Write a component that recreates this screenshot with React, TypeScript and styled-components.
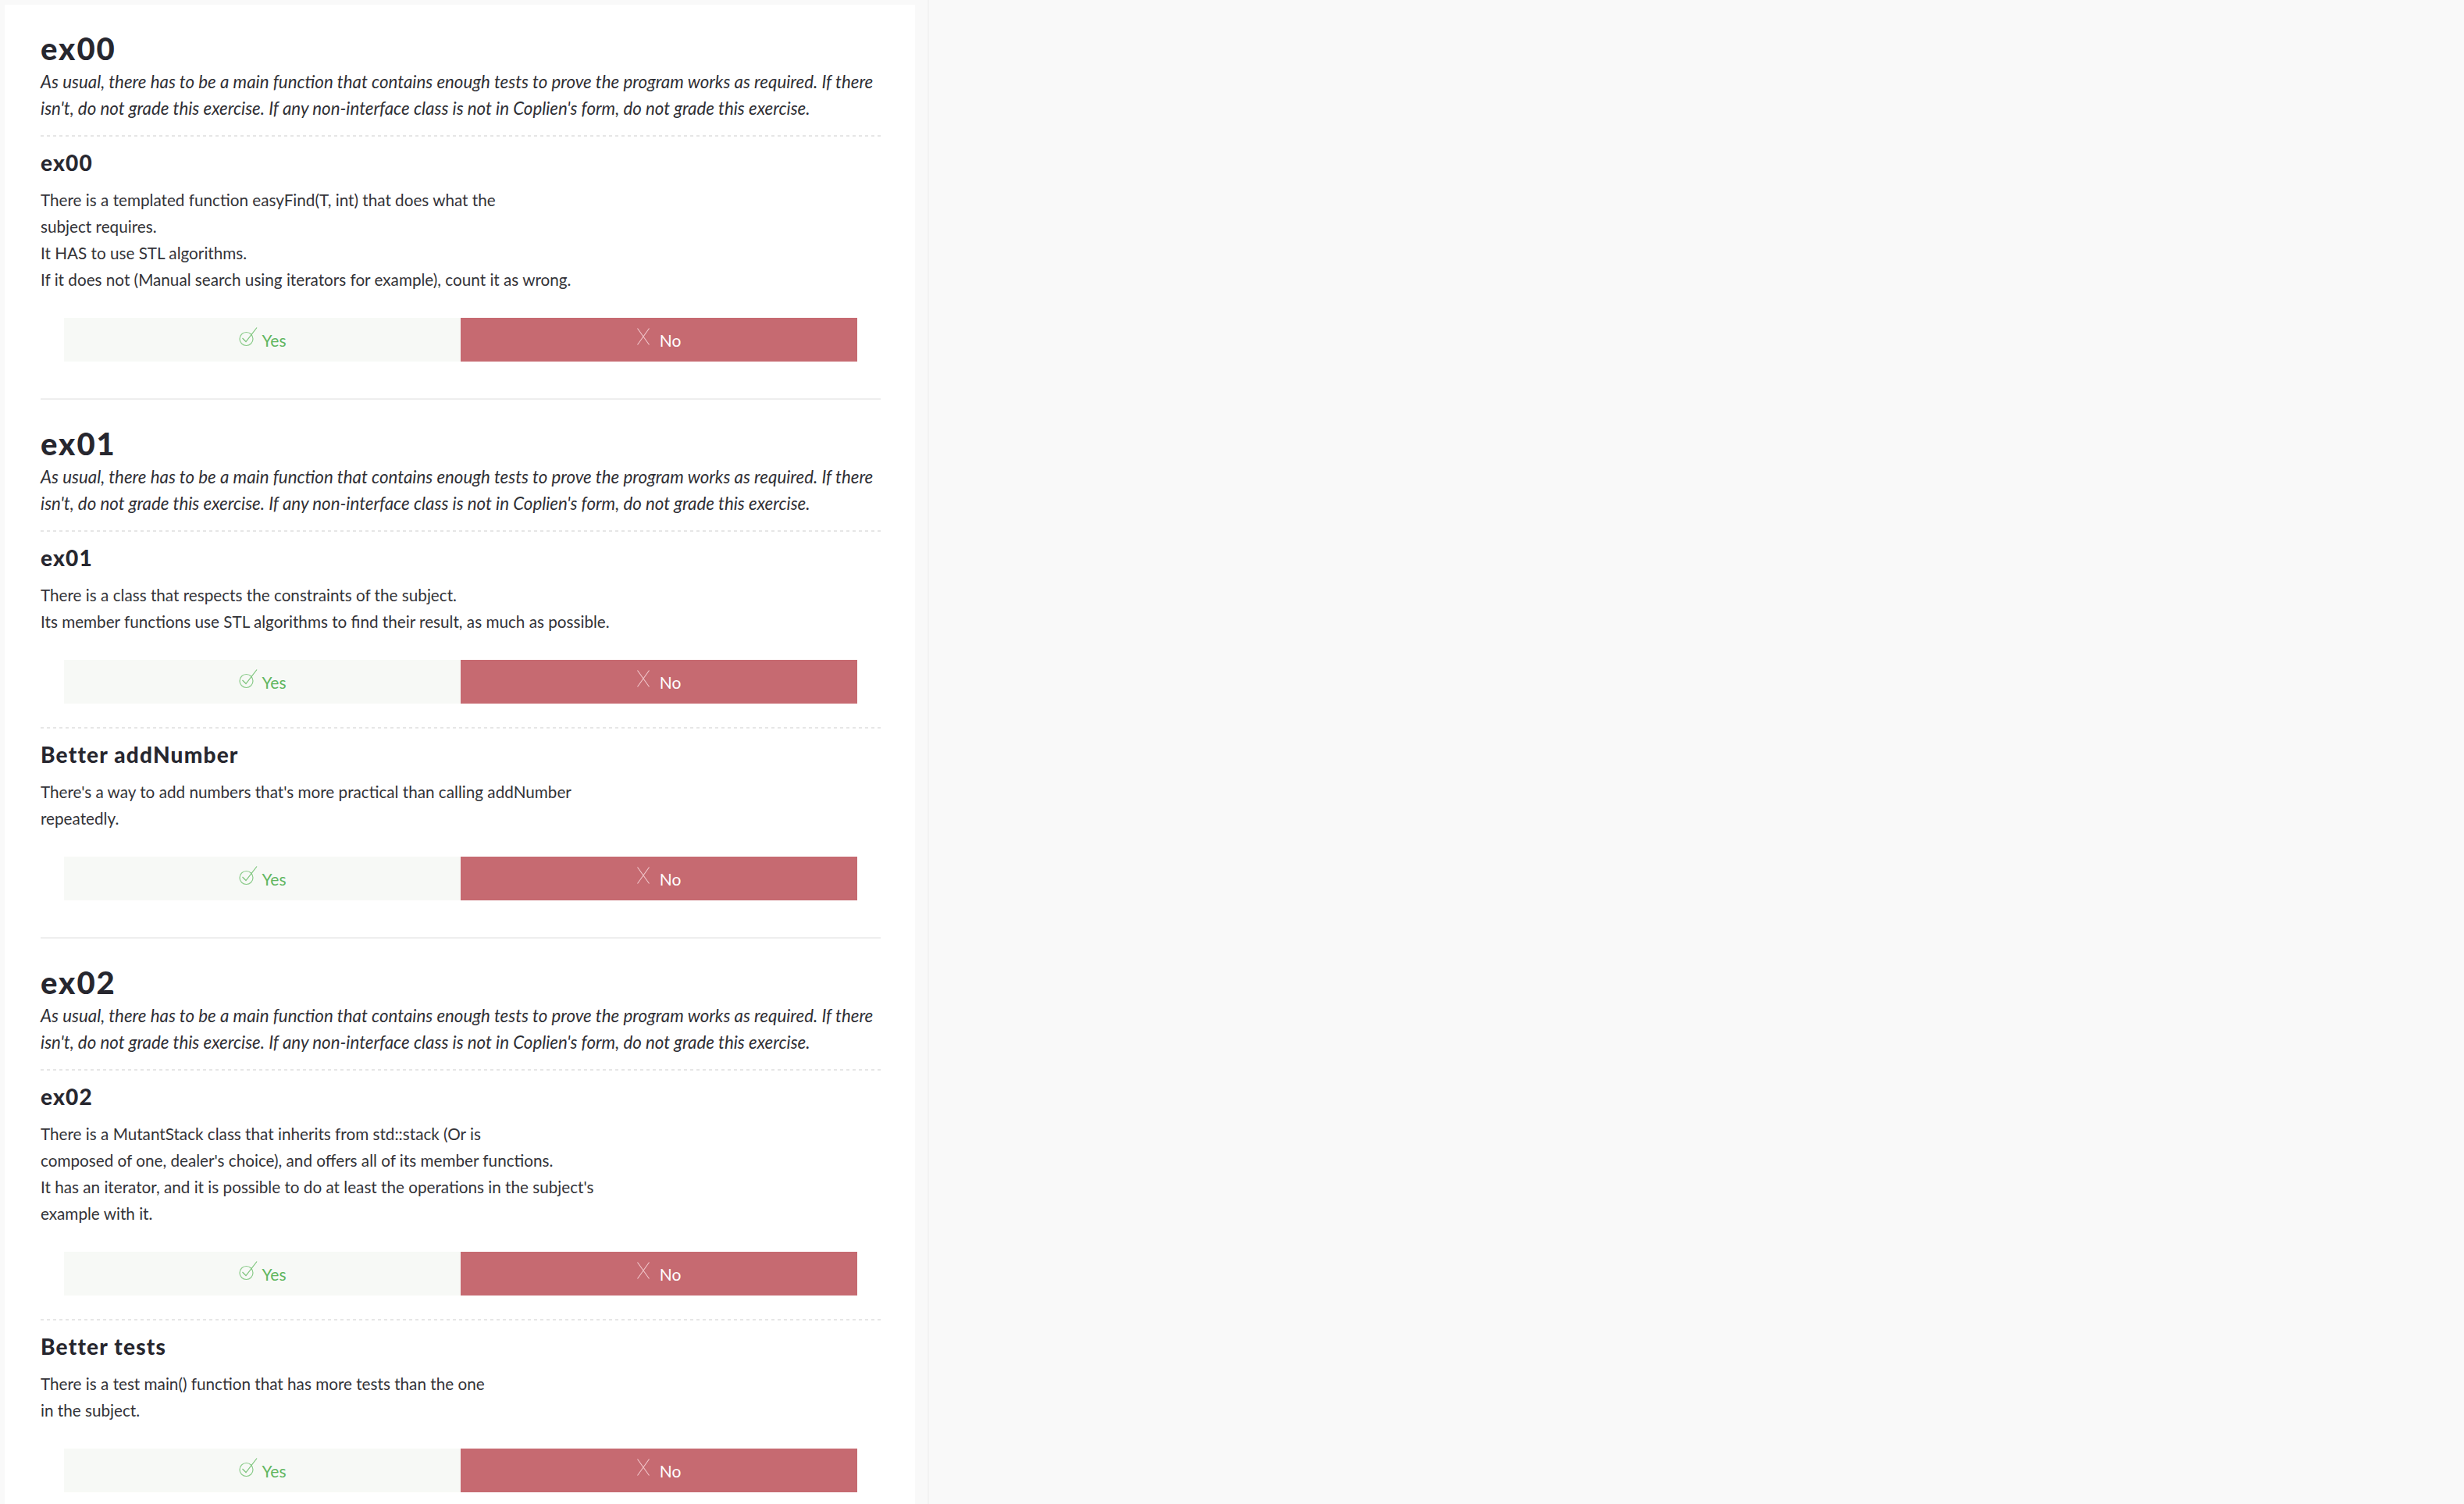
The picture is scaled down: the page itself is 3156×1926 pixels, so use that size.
import * as React from "react";
import styled, { createGlobalStyle } from "styled-components";

const GlobalStyle = createGlobalStyle`
  html, body {
    margin: 0;
    padding: 0;
    background: #f9f9f9;
  }
  body {
    font-family: Lato, "Open Sans", "Liberation Sans", sans-serif;
    color: #333;
  }
  * {
    box-sizing: border-box;
  }
`;

const SPage = styled.div`
  display: flex;
  flex-direction: row;
  align-items: flex-start;
  gap: 16px;
  padding: 6px 0 0 6px;
  min-height: 100vh;
`;

const SPanel = styled.div`
  width: 1166px;
  flex-shrink: 0;
  background: #fff;
  padding: 0 44px 40px 46px;
`;

const SAside = styled.div`
  flex: 1;
  align-self: stretch;
  border-left: 2px solid #f3f3f3;
  margin-top: -6px;
`;

const SSection = styled.section<{ last?: boolean }>`
  padding: 34px 0 ${({ last }) => (last ? "0" : "47px")};
  border-bottom: ${({ last }) => (last ? "none" : "2px solid #eeeeee")};
`;

const STitle = styled.h1`
  margin: 0 0 4px;
  font-size: 40px;
  line-height: 44px;
  font-weight: 900;
  letter-spacing: 2px;
  color: #27272f;
`;

const SDescription = styled.p`
  margin: 0 0 17px;
  font-size: 22.3px;
  line-height: 34px;
  font-style: italic;
  color: #2f2f35;
`;

const SItem = styled.div`
  & + & {
    margin-top: 30px;
  }
`;

const SDashed = styled.div`
  height: 2px;
  background-image: linear-gradient(to right, #e6e6e6 50%, transparent 50%);
  background-size: 8px 2px;
  background-repeat: repeat-x;
  margin-bottom: 17px;
`;

const SItemTitle = styled.h3`
  margin: 0 0 15px;
  font-size: 28px;
  line-height: 32px;
  font-weight: 900;
  letter-spacing: 1.2px;
  color: #27272f;
`;

const SBody = styled.p`
  margin: 0 0 32px;
  font-size: 20.7px;
  line-height: 34px;
  color: #333338;
`;

const SButtons = styled.div`
  display: flex;
  flex-direction: row;
  margin: 0 30px;
  height: 56px;
`;

const SAnswer = styled.button<{ variant: "yes" | "no" }>`
  flex: 1;
  display: flex;
  align-items: center;
  justify-content: center;
  gap: ${({ variant }) => (variant === "yes" ? "6px" : "13px")};
  border: none;
  margin: 0;
  padding: 0;
  cursor: pointer;
  font-family: inherit;
  font-size: 21px;
  background: ${({ variant }) => (variant === "yes" ? "#f7f9f6" : "#c66a71")};
  color: ${({ variant }) => (variant === "yes" ? "#5fb65f" : "#ffffff")};

  svg {
    margin-bottom: 8px;
    flex-shrink: 0;
  }
`;

const CheckIcon = () => (
  <svg width="24" height="26" viewBox="0 0 24 26" fill="none">
    <circle cx="9.5" cy="16" r="8.5" stroke="#8acb89" strokeWidth="1.2" />
    <path d="M4.5 15 L9 19.5 L23 1.5" stroke="#7cc47b" strokeWidth="1.2" />
  </svg>
);

const CrossIcon = () => (
  <svg width="16" height="22" viewBox="0 0 16 22" fill="none">
    <path d="M0.5 0.5 L15.5 21.5 M15.5 0.5 L0.5 21.5" stroke="#f1c6ca" strokeWidth="1.1" />
  </svg>
);

interface IScaleItem {
  title: string;
  lines: string[];
}

interface ISection {
  title: string;
  items: IScaleItem[];
}

const DESCRIPTION = [
  "As usual, there has to be a main function that contains enough tests to prove the program works as required. If there",
  "isn't, do not grade this exercise. If any non-interface class is not in Coplien's form, do not grade this exercise."
];

const SECTIONS: ISection[] = [
  {
    title: "ex00",
    items: [
      {
        title: "ex00",
        lines: [
          "There is a templated function easyFind(T, int) that does what the",
          "subject requires.",
          "It HAS to use STL algorithms.",
          "If it does not (Manual search using iterators for example), count it as wrong."
        ]
      }
    ]
  },
  {
    title: "ex01",
    items: [
      {
        title: "ex01",
        lines: [
          "There is a class that respects the constraints of the subject.",
          "Its member functions use STL algorithms to find their result, as much as possible."
        ]
      },
      {
        title: "Better addNumber",
        lines: [
          "There's a way to add numbers that's more practical than calling addNumber",
          "repeatedly."
        ]
      }
    ]
  },
  {
    title: "ex02",
    items: [
      {
        title: "ex02",
        lines: [
          "There is a MutantStack class that inherits from std::stack (Or is",
          "composed of one, dealer's choice), and offers all of its member functions.",
          "It has an iterator, and it is possible to do at least the operations in the subject's",
          "example with it."
        ]
      },
      {
        title: "Better tests",
        lines: [
          "There is a test main() function that has more tests than the one",
          "in the subject."
        ]
      }
    ]
  }
];

const Lines = ({ lines }: { lines: string[] }) => (
  <>
    {lines.map((line, i) => (
      <React.Fragment key={i}>
        {i > 0 && <br />}
        {line}
      </React.Fragment>
    ))}
  </>
);

const ScaleItem = ({ item }: { item: IScaleItem }) => (
  <SItem>
    <SDashed />
    <SItemTitle>{item.title}</SItemTitle>
    <SBody>
      <Lines lines={item.lines} />
    </SBody>
    <SButtons>
      <SAnswer variant="yes">
        <CheckIcon />
        <span>Yes</span>
      </SAnswer>
      <SAnswer variant="no">
        <CrossIcon />
        <span>No</span>
      </SAnswer>
    </SButtons>
  </SItem>
);

export default function App() {
  return (
    <>
      <GlobalStyle />
      <SPage>
        <SPanel>
          {SECTIONS.map((section, i) => (
            <SSection key={section.title} last={i === SECTIONS.length - 1}>
              <STitle>{section.title}</STitle>
              <SDescription>
                <Lines lines={DESCRIPTION} />
              </SDescription>
              {section.items.map(item => (
                <ScaleItem key={item.title} item={item} />
              ))}
            </SSection>
          ))}
        </SPanel>
        <SAside />
      </SPage>
    </>
  );
}
